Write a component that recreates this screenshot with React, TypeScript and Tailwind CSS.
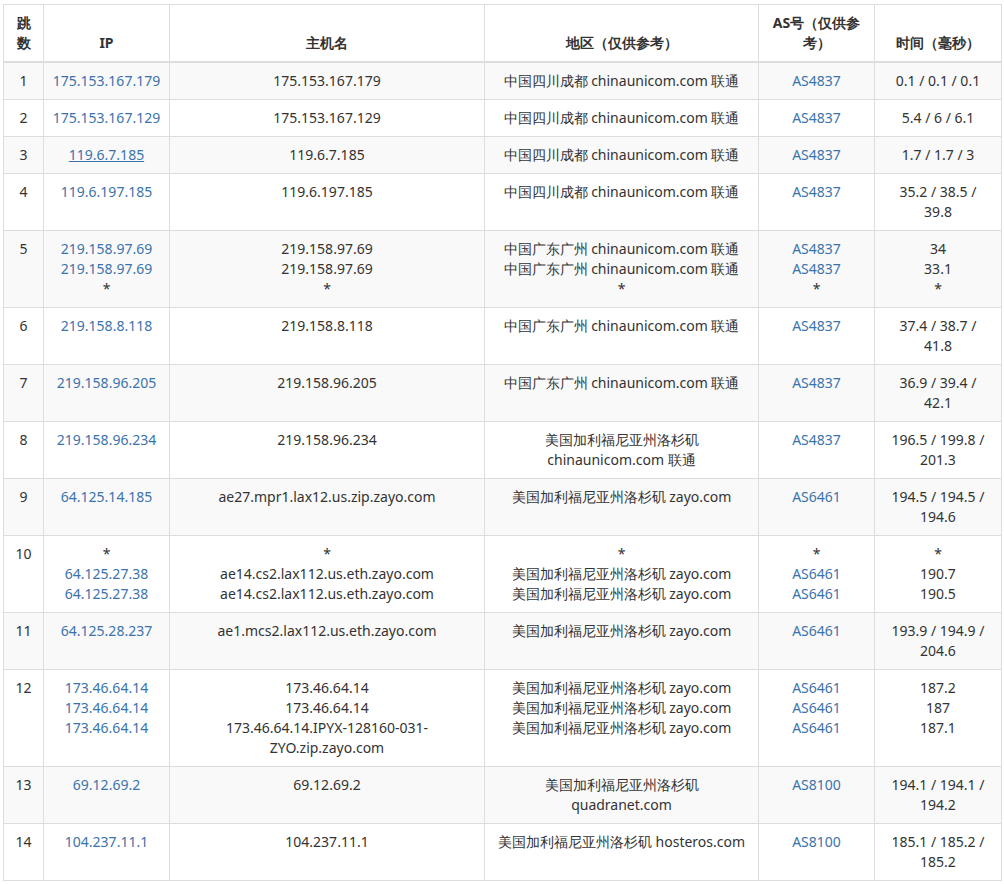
import React from "react";

type Cell = React.ReactNode;
const L = ({ children, u }: { children: React.ReactNode; u?: boolean }) => (
  <span className={"text-[#3b73ad]" + (u ? " underline" : "")}>{children}</span>
);
const lines = (arr: string[], link = false) =>
  arr.map((s, i) => (
    <React.Fragment key={i}>
      {i > 0 && <br />}
      {link && s !== "*" ? <L>{s}</L> : s}
    </React.Fragment>
  ));

const CD = "中国四川成都 chinaunicom.com 联通";
const GZ = "中国广东广州 chinaunicom.com 联通";
const LA = "美国加利福尼亚州洛杉矶 zayo.com";

const rows: Cell[][] = [
  ["1", lines(["175.153.167.179"], true), "175.153.167.179", CD, lines(["AS4837"], true), "0.1 / 0.1 / 0.1"],
  ["2", lines(["175.153.167.129"], true), "175.153.167.129", CD, lines(["AS4837"], true), "5.4 / 6 / 6.1"],
  ["3", <L u>119.6.7.185</L>, "119.6.7.185", CD, lines(["AS4837"], true), "1.7 / 1.7 / 3"],
  ["4", lines(["119.6.197.185"], true), "119.6.197.185", CD, lines(["AS4837"], true), lines(["35.2 / 38.5 /", "39.8"])],
  ["5", lines(["219.158.97.69", "219.158.97.69", "*"], true), lines(["219.158.97.69", "219.158.97.69", "*"]), lines([GZ, GZ, "*"]), lines(["AS4837", "AS4837", "*"], true), lines(["34", "33.1", "*"])],
  ["6", lines(["219.158.8.118"], true), "219.158.8.118", GZ, lines(["AS4837"], true), lines(["37.4 / 38.7 /", "41.8"])],
  ["7", lines(["219.158.96.205"], true), "219.158.96.205", GZ, lines(["AS4837"], true), lines(["36.9 / 39.4 /", "42.1"])],
  ["8", lines(["219.158.96.234"], true), "219.158.96.234", lines(["美国加利福尼亚州洛杉矶", "chinaunicom.com 联通"]), lines(["AS4837"], true), lines(["196.5 / 199.8 /", "201.3"])],
  ["9", lines(["64.125.14.185"], true), "ae27.mpr1.lax12.us.zip.zayo.com", LA, lines(["AS6461"], true), lines(["194.5 / 194.5 /", "194.6"])],
  ["10", lines(["*", "64.125.27.38", "64.125.27.38"], true), lines(["*", "ae14.cs2.lax112.us.eth.zayo.com", "ae14.cs2.lax112.us.eth.zayo.com"]), lines(["*", LA, LA]), lines(["*", "AS6461", "AS6461"], true), lines(["*", "190.7", "190.5"])],
  ["11", lines(["64.125.28.237"], true), "ae1.mcs2.lax112.us.eth.zayo.com", LA, lines(["AS6461"], true), lines(["193.9 / 194.9 /", "204.6"])],
  ["12", lines(["173.46.64.14", "173.46.64.14", "173.46.64.14"], true), lines(["173.46.64.14", "173.46.64.14", "173.46.64.14.IPYX-128160-031-", "ZYO.zip.zayo.com"]), lines([LA, LA, LA]), lines(["AS6461", "AS6461", "AS6461"], true), lines(["187.2", "187", "187.1"])],
  ["13", lines(["69.12.69.2"], true), "69.12.69.2", lines(["美国加利福尼亚州洛杉矶", "quadranet.com"]), lines(["AS8100"], true), lines(["194.1 / 194.1 /", "194.2"])],
  ["14", lines(["104.237.11.1"], true), "104.237.11.1", "美国加利福尼亚州洛杉矶 hosteros.com", lines(["AS8100"], true), lines(["185.1 / 185.2 /", "185.2"])],
];

const widths = ["w-[40px]", "w-[126px]", "w-[315px]", "w-[274px]", "w-[116px]", "w-[127px]"];

export default function App() {
  return (
    <div className="bg-white w-[1004px] h-[884px] pt-[4px] pl-[3px] font-['Open_Sans','Noto_Sans_CJK_SC',sans-serif] text-[14px] leading-[20px] text-[#333]">
      <table className="table-fixed border-collapse w-[998px] border border-[#ddd]">
        <colgroup>
          {widths.map((w, i) => <col key={i} className={w} />)}
        </colgroup>
        <thead>
          <tr>
            {[lines(["跳", "数"]), "IP", "主机名", "地区（仅供参考）", lines(["AS号（仅供参", "考）"]), "时间（毫秒）"].map((h, i) => (
              <th key={i} className="border border-[#ddd] border-b-2 px-2 py-2 align-bottom text-center font-bold">{h}</th>
            ))}
          </tr>
        </thead>
        <tbody>
          {rows.map((r, ri) => (
            <tr key={ri} className={ri % 2 === 0 ? "bg-[#f9f9f9]" : "bg-white"}>
              {r.map((c, ci) => (
                <td key={ci} className="border border-[#ddd] px-2 py-2 align-top text-center whitespace-nowrap">{c}</td>
              ))}
            </tr>
          ))}
        </tbody>
      </table>
    </div>
  );
}
